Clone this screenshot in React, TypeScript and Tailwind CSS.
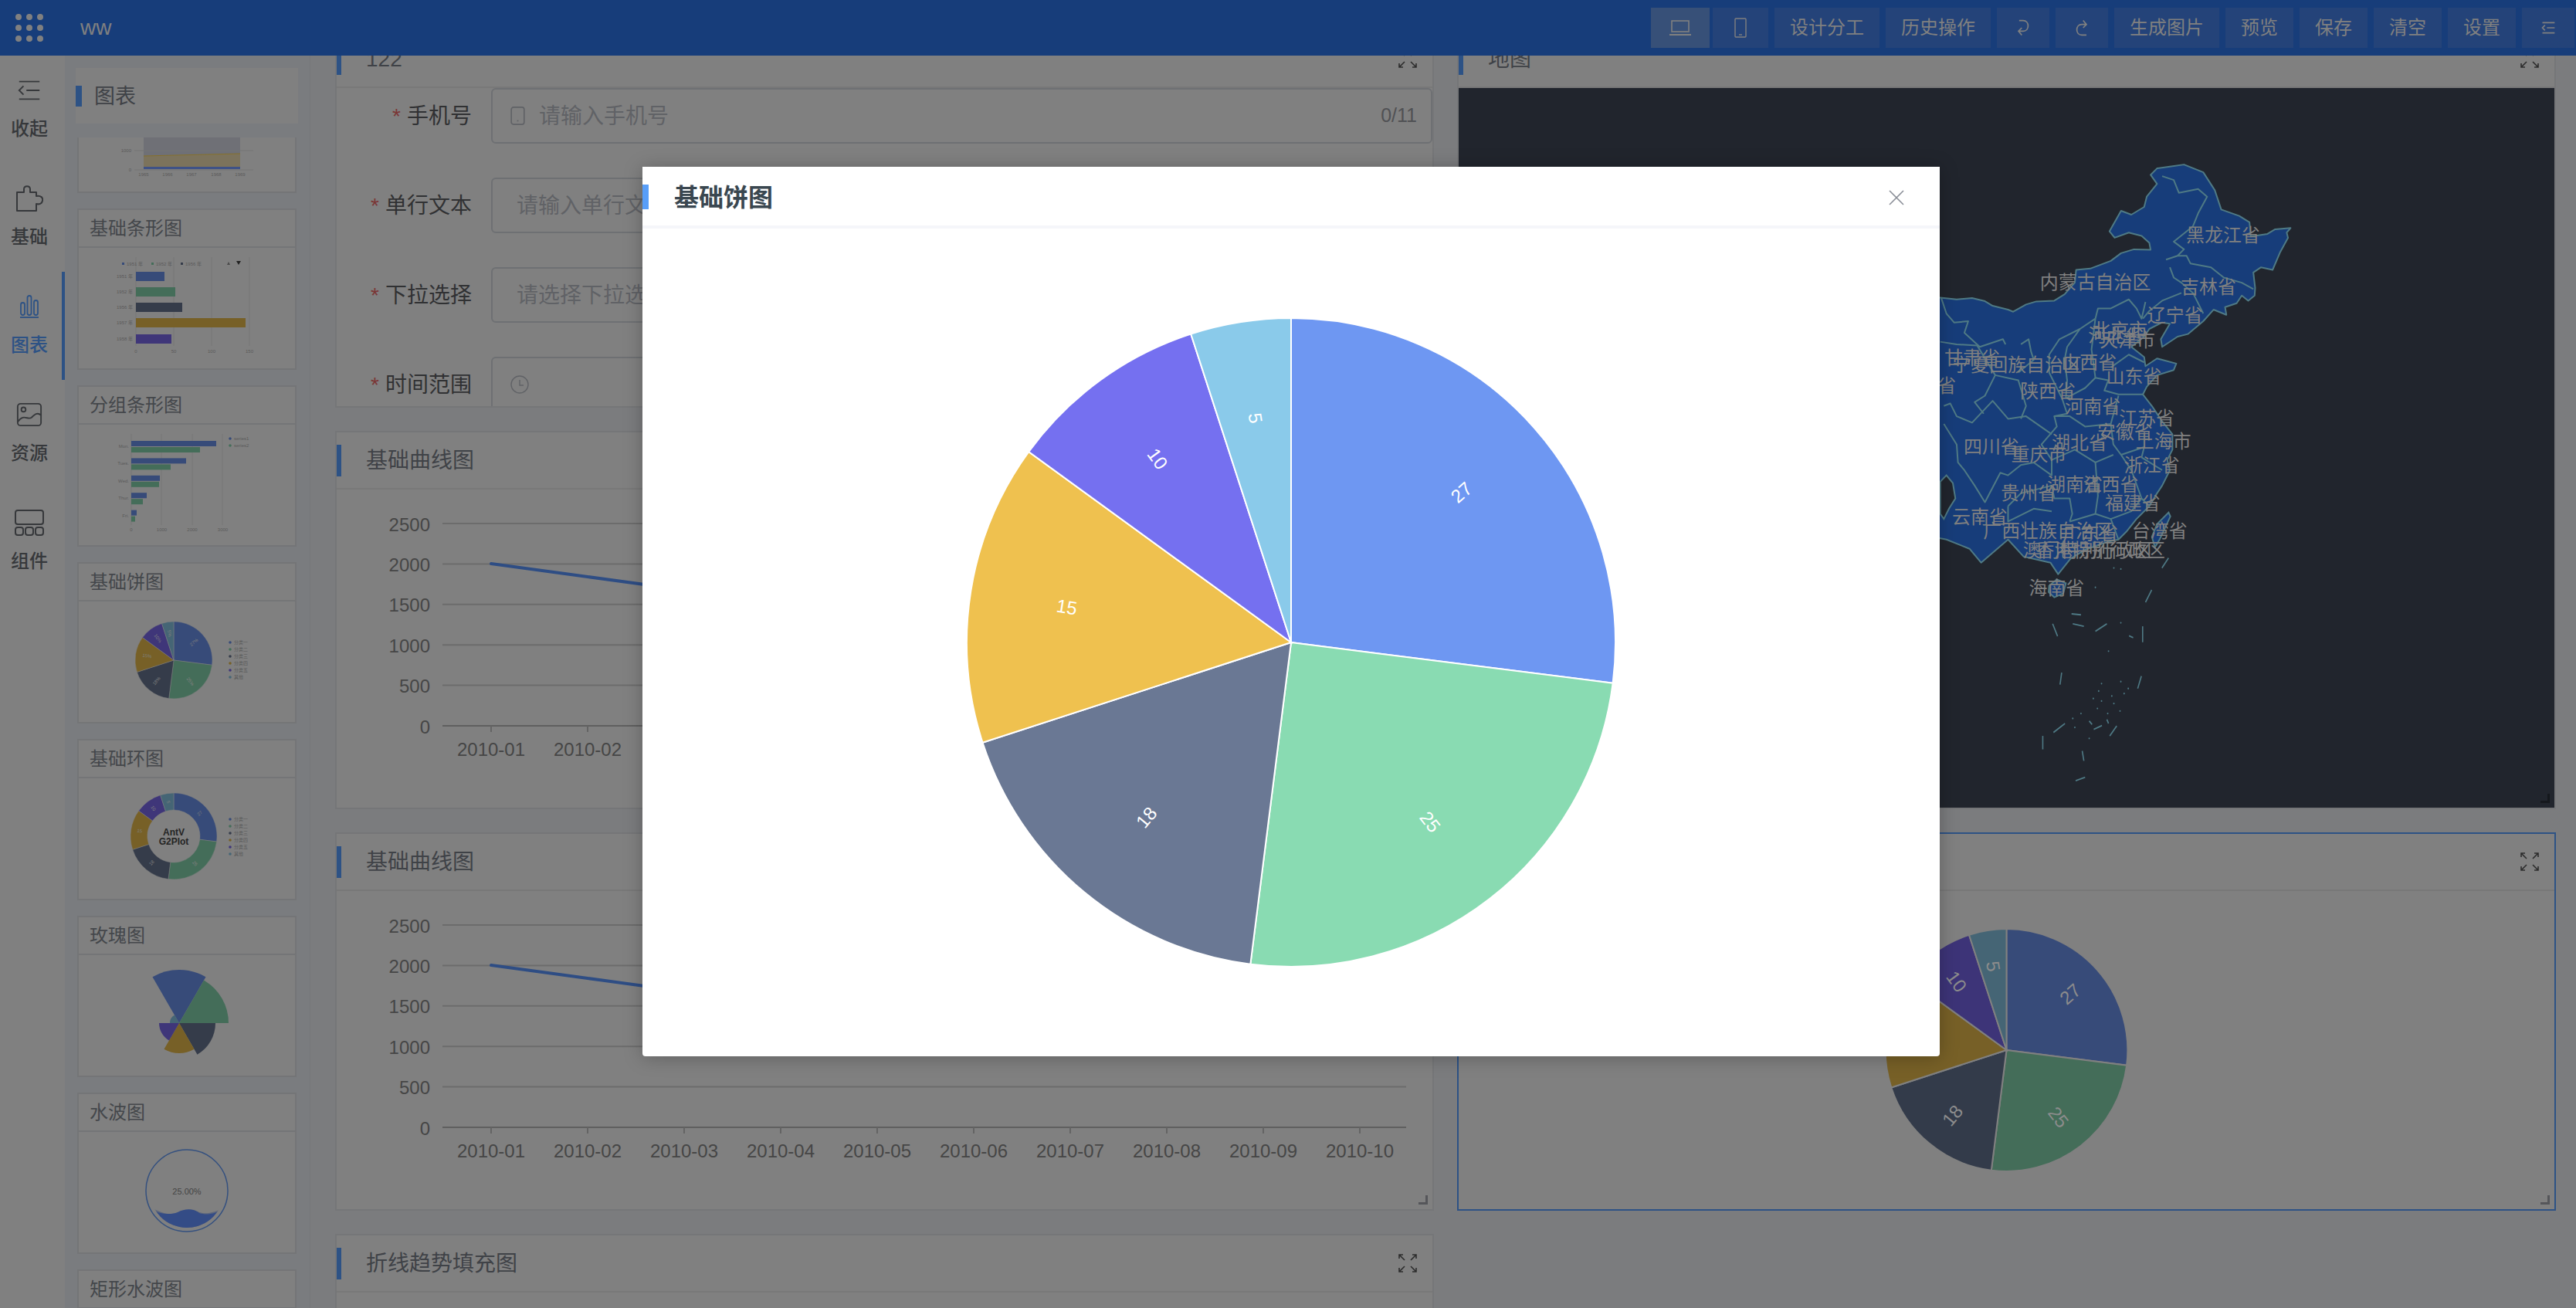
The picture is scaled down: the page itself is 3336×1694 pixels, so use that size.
import type { ReactNode } from 'react'

// Alle kleuren staan al gedimd (de scrim achter de modal zit er dus "ingebakken").
const THUMB = ['#374b79', '#446d59', '#353c4a', '#776027', '#3f3679', '#456575']
const MODAL_PIE = ['#6e97f2', '#89dbb2', '#6a7894', '#efc14f', '#7570f0', '#8acaea']
const DIM_PIE = ['#374b79', '#446d59', '#333b4a', '#776027', '#3d3478', '#456575']
const VALUES = [27, 25, 18, 15, 10, 5]
const BLUE = 'bg-[#2d5285]'

function polar(cx: number, cy: number, r: number, deg: number): [number, number] {
  const a = ((deg - 90) * Math.PI) / 180
  return [cx + r * Math.cos(a), cy + r * Math.sin(a)]
}

function sector(cx: number, cy: number, r: number, a0: number, a1: number, inner = 0): string {
  const [x0, y0] = polar(cx, cy, r, a0)
  const [x1, y1] = polar(cx, cy, r, a1)
  const large = a1 - a0 > 180 ? 1 : 0
  if (!inner) return `M${cx} ${cy}L${x0} ${y0}A${r} ${r} 0 ${large} 1 ${x1} ${y1}Z`
  const [x2, y2] = polar(cx, cy, inner, a1)
  const [x3, y3] = polar(cx, cy, inner, a0)
  return `M${x0} ${y0}A${r} ${r} 0 ${large} 1 ${x1} ${y1}L${x2} ${y2}A${inner} ${inner} 0 ${large} 0 ${x3} ${y3}Z`
}

function PieSlices({
  cx, cy, r, colors, stroke, labelColor, fontSize, inner = 0, labelAt = 0.7, suffix = '',
}: {
  cx: number; cy: number; r: number; colors: string[]; stroke: string; labelColor: string
  fontSize: number; inner?: number; labelAt?: number; suffix?: string
}) {
  let acc = 0
  return (
    <>
      {VALUES.map((v, i) => {
        const a0 = (acc / 100) * 360
        acc += v
        const a1 = (acc / 100) * 360
        const mid = (a0 + a1) / 2
        const [lx, ly] = polar(cx, cy, r * labelAt, mid)
        const rot = mid < 180 ? mid - 90 : mid - 270
        return (
          <g key={v}>
            <path d={sector(cx, cy, r, a0, a1, inner)} fill={colors[i]} stroke={stroke} strokeWidth={r > 100 ? 2 : 0.5} />
            <text
              x={lx}
              y={ly}
              fontSize={fontSize}
              fill={labelColor}
              textAnchor="middle"
              dominantBaseline="central"
              transform={`rotate(${rot} ${lx} ${ly})`}
            >
              {v}
              {suffix}
            </text>
          </g>
        )
      })}
    </>
  )
}

function Legend({ x, y, step = 9, items }: { x: number; y: number; step?: number; items: string[] }) {
  return (
    <>
      {items.map((t, i) => (
        <g key={t}>
          <circle cx={x} cy={y + i * step} r={1.8} fill={THUMB[i]} />
          <text x={x + 5} y={y + i * step} fontSize={6} fill="#5a5a5a" dominantBaseline="central">
            {t}
          </text>
        </g>
      ))}
    </>
  )
}

const LEGEND6 = ['分类一', '分类二', '分类三', '分类四', '分类五', '其他']

function ThumbSvg({ children }: { children: ReactNode }) {
  return (
    <svg viewBox="0 0 280 156" className="block h-[156px] w-[280px]">
      {children}
    </svg>
  )
}

function AreaThumb() {
  return (
    <ThumbSvg>
      <path d="M84 0H209V107L84 110Z" fill="#6f7076" />
      <path d="M84 110L209 107V124H84Z" fill="#7c735c" />
      <path d="M84 110L209 107" stroke="#85702c" fill="none" />
      <rect x={84} y={124} width={125} height={3} fill="#3f5286" />
      <line x1={72} x2={226} y1={103} y2={103} stroke="#747474" />
      <line x1={72} x2={226} y1={128} y2={128} stroke="#747474" />
      <text x={68} y={103} fontSize={6} fill="#5a5a5a" textAnchor="end" dominantBaseline="central">1000</text>
      <text x={68} y={128} fontSize={6} fill="#5a5a5a" textAnchor="end" dominantBaseline="central">0</text>
      {[84, 115, 146, 178, 209].map((x, i) => (
        <text key={x} x={x} y={134} fontSize={6} fill="#5a5a5a" textAnchor="middle" dominantBaseline="central">
          {1965 + i}
        </text>
      ))}
    </ThumbSvg>
  )
}

function BarThumb() {
  const bars = [37, 51, 60, 142, 46]
  const tops = [31, 51, 71, 91, 112]
  return (
    <ThumbSvg>
      {[74, 123, 172, 221].map((x) => (
        <line key={x} x1={x} x2={x} y1={12} y2={127} stroke="#767676" />
      ))}
      {bars.map((w, i) => (
        <g key={i}>
          <rect x={74} y={tops[i]} width={w} height={12} fill={THUMB[i]} />
          <text x={70} y={tops[i] + 6} fontSize={6} fill="#5a5a5a" textAnchor="end" dominantBaseline="central">
            {['1951 年', '1952 年', '1956 年', '1957 年', '1958 年'][i]}
          </text>
        </g>
      ))}
      {[0, 50, 100, 150].map((t, i) => (
        <text key={t} x={74 + i * 49} y={134} fontSize={6} fill="#5a5a5a" textAnchor="middle" dominantBaseline="central">
          {t}
        </text>
      ))}
      {[0, 38, 76].map((dx, i) => (
        <g key={dx}>
          <rect x={56 + dx} y={19} width={3} height={3} fill={THUMB[i]} />
          <text x={62 + dx} y={20.5} fontSize={6} fill="#5a5a5a" dominantBaseline="central">
            {['1951 年', '1952 年', '1956 年'][i]}
          </text>
        </g>
      ))}
      <path d="M192 22l2-4 2 4z" fill="#4a4a4a" />
      <path d="M204 17h6l-3 5z" fill="#222" />
    </ThumbSvg>
  )
}

function GroupBarThumb() {
  const rows = [[110, 89, 'Mon.'], [71, 51, 'Tues.'], [37, 36, 'Wed.'], [20, 15, 'Thur.'], [7, 5, 'Fri.']] as const
  return (
    <ThumbSvg>
      {[68, 107, 147, 186].map((x) => (
        <line key={x} x1={x} x2={x} y1={12} y2={130} stroke="#767676" />
      ))}
      {rows.map(([a, b, t], i) => (
        <g key={t}>
          <rect x={68} y={21 + i * 22.4} width={a} height={7} fill={THUMB[0]} />
          <rect x={68} y={29 + i * 22.4} width={b} height={7} fill={THUMB[1]} />
          <text x={65} y={28 + i * 22.4} fontSize={6} fill="#5a5a5a" textAnchor="end" dominantBaseline="central">
            {t}
          </text>
        </g>
      ))}
      {[0, 1000, 2000, 3000].map((t, i) => (
        <text key={t} x={68 + i * 39.5} y={136} fontSize={6} fill="#5a5a5a" textAnchor="middle" dominantBaseline="central">
          {t}
        </text>
      ))}
      <Legend x={196} y={18} items={['series1', 'series2']} />
    </ThumbSvg>
  )
}

function PieThumb() {
  return (
    <ThumbSvg>
      <PieSlices cx={123} cy={76} r={50} colors={THUMB} stroke="#808080" labelColor="#808080" fontSize={6} suffix="%" />
      <Legend x={196} y={53} items={LEGEND6} />
    </ThumbSvg>
  )
}

function DonutThumb() {
  return (
    <ThumbSvg>
      <PieSlices cx={123} cy={75} r={56} inner={34} labelAt={0.8} colors={THUMB} stroke="#808080" labelColor="#808080" fontSize={6} />
      <text x={123} y={70} fontSize={12} fontWeight={700} fill="#242424" textAnchor="middle" dominantBaseline="central">AntV</text>
      <text x={123} y={82} fontSize={12} fontWeight={700} fill="#242424" textAnchor="middle" dominantBaseline="central">G2Plot</text>
      <Legend x={196} y={53} items={LEGEND6} />
    </ThumbSvg>
  )
}

function RoseThumb() {
  const petals = [
    [-30, 30, 69],
    [30, 90, 64],
    [90, 150, 47],
    [150, 210, 39],
    [210, 270, 26],
    [270, 330, 12],
  ]
  return (
    <ThumbSvg>
      {petals.map(([a0, a1, r], i) => (
        <path key={a0} d={sector(130, 88, r, a0, a1)} fill={THUMB[i]} />
      ))}
    </ThumbSvg>
  )
}

function LiquidThumb() {
  return (
    <ThumbSvg>
      <defs>
        <clipPath id="liquid-clip">
          <circle cx={140} cy={76} r={48} />
        </clipPath>
      </defs>
      <circle cx={140} cy={76} r={53} fill="none" stroke="#34507f" strokeWidth={1.5} />
      <g clipPath="url(#liquid-clip)">
        <path d="M92 98C104 102 116 110 128 106C138 100 146 98 156 104C168 108 178 102 190 98V132H92Z" fill="#374b79" opacity={0.5} />
        <path d="M92 100C104 106 118 108 128 104C138 99 148 99 156 105C168 109 178 104 190 100V132H92Z" fill="#344c86" />
      </g>
      <text x={140} y={77} fontSize={11} fill="#444444" textAnchor="middle" dominantBaseline="central">25.00%</text>
    </ThumbSvg>
  )
}

function ThumbCard({ title, children }: { title?: string; children: ReactNode }) {
  return (
    <div className="w-[284px] shrink-0 border-2 border-[#747577] bg-[#808080]">
      {title && (
        <div className="flex h-[49px] items-center border-b-2 border-[#747577] pl-[14px] text-[24px] text-[#44474b]">{title}</div>
      )}
      {children}
    </div>
  )
}

function Icon({ children, className }: { children: ReactNode; className: string }) {
  return (
    <svg viewBox="0 0 36 36" fill="none" stroke="currentColor" strokeWidth="2" className={className}>
      {children}
    </svg>
  )
}

const RAIL: { label: string; active?: boolean; icon: ReactNode }[] = [
  {
    label: '收起',
    icon: (
      <Icon className="h-[34px] w-[34px]">
        <path d="M4 6H32M14 18H32M4 30H32M10 12L4 18L10 24" />
      </Icon>
    ),
  },
  {
    label: '基础',
    icon: (
      <Icon className="h-[36px] w-[36px]">
        <path d="M2 10H11V6C11 1 19 1 19 6V10H27V15C33 14 36 17 35 21C34 25 31 26 27 25V34H2Z" strokeLinejoin="round" />
      </Icon>
    ),
  },
  {
    label: '图表',
    active: true,
    icon: (
      <svg viewBox="0 0 24 30" fill="none" stroke="currentColor" strokeWidth="1.8" className="h-[30px] w-[24px]">
        <rect x="1" y="10" width="5" height="16" rx="2.5" />
        <rect x="9.5" y="1" width="5" height="25" rx="2.5" />
        <rect x="18" y="7" width="5" height="19" rx="2.5" />
        <path d="M0 29H24" />
      </svg>
    ),
  },
  {
    label: '资源',
    icon: (
      <Icon className="h-[34px] w-[36px]">
        <rect x="2" y="3" width="32" height="30" rx="4" />
        <circle cx="10" cy="11" r="3" />
        <path d="M2 28C10 16 16 26 21 22C25 18 29 14 34 19" />
      </Icon>
    ),
  },
  {
    label: '组件',
    icon: (
      <svg viewBox="0 0 38 34" fill="none" stroke="currentColor" strokeWidth="2" className="h-[34px] w-[38px]">
        <rect x="1" y="1" width="36" height="18" rx="3" />
        <rect x="1" y="23" width="10" height="10" rx="3" />
        <rect x="14" y="23" width="10" height="10" rx="3" />
        <rect x="27" y="23" width="10" height="10" rx="3" />
      </svg>
    ),
  },
]

function Toolbar() {
  const btn = 'flex h-[52px] items-center justify-center bg-[#244379] text-[24px] text-[#808080]'
  return (
    <div className="ml-auto flex items-center gap-2 pr-[2px]">
      <div className="flex gap-[4px]">
        <div className={`${btn} w-[76px] !bg-[#375078]`}>
          <svg viewBox="0 0 28 20" fill="none" stroke="currentColor" strokeWidth="1.6" className="h-[20px] w-[28px]">
            <rect x="3" y="1" width="22" height="14" />
            <path d="M0 19H28" strokeWidth="2" />
          </svg>
        </div>
        <div className={`${btn} w-[72px]`}>
          <svg viewBox="0 0 16 26" fill="none" stroke="currentColor" strokeWidth="1.4" className="h-[26px] w-[16px]">
            <rect x="1" y="1" width="14" height="24" rx="1" />
            <path d="M6 22H10" />
          </svg>
        </div>
      </div>
      <div className={`${btn} w-[136px]`}>设计分工</div>
      <div className={`${btn} w-[136px]`}>历史操作</div>
      <div className={`${btn} w-[68px]`}>
        <svg viewBox="0 0 24 28" fill="none" stroke="currentColor" strokeWidth="2" className="h-[24px] w-[24px]">
          <path d="M6 3H12C22 3 22 19 12 19H5M10 14L5 19L10 25" />
        </svg>
      </div>
      <div className={`${btn} w-[68px]`}>
        <svg viewBox="0 0 24 28" fill="none" stroke="currentColor" strokeWidth="2" className="h-[24px] w-[24px]">
          <path d="M19 25H12C2 25 2 9 12 9H19M14 3L19 9L14 14" />
        </svg>
      </div>
      <div className={`${btn} w-[136px]`}>生成图片</div>
      <div className={`${btn} w-[88px]`}>预览</div>
      <div className={`${btn} w-[88px]`}>保存</div>
      <div className={`${btn} w-[88px]`}>清空</div>
      <div className={`${btn} w-[88px]`}>设置</div>
      <div className={`${btn} w-[68px]`}>
        <svg viewBox="0 0 24 24" fill="none" stroke="currentColor" strokeWidth="2" className="h-[20px] w-[20px]">
          <path d="M3 4H22M10 12H22M3 20H22M7 8L3 12L7 16" />
        </svg>
      </div>
    </div>
  )
}

function ExpandIcon() {
  return (
    <svg viewBox="0 0 24 24" fill="none" stroke="#2c2c2c" strokeWidth="1.6" className="h-[24px] w-[24px] shrink-0">
      <path d="M1 6V1H6M1 1L8 8M18 1H23V6M23 1L16 8M1 18V23H6M1 23L8 16M18 23H23V18M23 23L16 16" />
    </svg>
  )
}

function CardHeader({ title }: { title: string }) {
  return (
    <div className="flex h-[74px] shrink-0 items-center border-b-2 border-[#787878] pr-[20px]">
      <span className={`h-[41px] w-[6px] shrink-0 ${BLUE}`} />
      <span className="ml-[32px] pt-[1px] text-[28px] text-[#3f4247]">{title}</span>
      <span className="ml-auto">
        <ExpandIcon />
      </span>
    </div>
  )
}

function ResizeHandle({ dark }: { dark?: boolean }) {
  return (
    <span
      className={`absolute right-[6px] bottom-[6px] h-[12px] w-[12px] border-r-[3px] border-b-[3px] ${
        dark ? 'border-[#15181d]' : 'border-[#55565a]'
      }`}
    />
  )
}

function FormRow({ label, children }: { label: string; children: ReactNode }) {
  return (
    <div className="flex h-[72px] shrink-0 items-center">
      <label className="w-[175px] shrink-0 pt-[2px] text-right text-[28px] text-[#303133]">
        <span className="mr-[8px] text-[#7b3636]">*</span>
        {label}
      </label>
      <div className="ml-[25px] flex h-full flex-1 items-center rounded-[6px] border-2 border-[#6e7073] text-[28px] text-[#606266]">
        {children}
      </div>
    </div>
  )
}

function LineChart() {
  const ys = [2500, 2000, 1500, 1000, 500, 0]
  return (
    <svg viewBox="0 0 1419 412" className="block h-[412px] w-full">
      {ys.map((v, i) => {
        const y = 44 + i * 52.4
        return (
          <g key={v}>
            <line x1={137} x2={1385} y1={y} y2={y} stroke={v === 0 ? '#5f5f5f' : '#6c6c6c'} strokeWidth={2} />
            <text x={121} y={y + 1} fontSize={24} fill="#464646" textAnchor="end" dominantBaseline="central">
              {v}
            </text>
          </g>
        )
      })}
      {Array.from({ length: 10 }, (_, i) => (
        <g key={i}>
          <line x1={200 + i * 125} x2={200 + i * 125} y1={306} y2={314} stroke="#646464" strokeWidth={2} />
          <text x={200 + i * 125} y={336} fontSize={24} fill="#464646" textAnchor="middle" dominantBaseline="central">
            2010-{String(i + 1).padStart(2, '0')}
          </text>
        </g>
      ))}
      <polyline
        points="200,96 325,113 450,130 575,150 700,120 825,170 950,135"
        fill="none"
        stroke="#2e4d84"
        strokeWidth={4}
        strokeLinecap="round"
      />
    </svg>
  )
}

function ChartCard({ title, children, className }: { title: string; children?: ReactNode; className: string }) {
  return (
    <div className={`relative flex shrink-0 flex-col overflow-hidden border-2 border-[#757678] bg-[#808080] ${className}`}>
      <CardHeader title={title} />
      {children}
    </div>
  )
}

// Kaart: coördinaten in de 3x-schaal van de crop, dus groep geschaald met 1/3.
const CHINA =
  'M-90 558L36 558L100 565L160 560L210 572L240 590L300 605L320 613L370 585L410 573L480 570L520 545L560 500L565 450L620 445L660 430L700 415L740 385L790 370L855 372L850 345L820 318L770 305L715 325L695 300L740 220L780 235L830 205L840 165L880 115L855 80L880 55L930 48L985 40L1060 70L1105 140L1130 215L1200 240L1240 265L1245 320L1310 310L1340 292L1400 287L1385 305L1390 325L1360 380L1330 450L1285 440L1255 460L1262 520L1260 550L1235 570L1210 550L1190 580L1145 595L1150 625L1100 605L1060 650L1000 700L960 710L900 750L895 720L930 660L900 655L850 680L830 710L780 750L830 790L835 825L880 795L955 815L945 840L880 860L840 905L825 935L860 980L900 1040L940 1090L940 1150L920 1190L930 1230L900 1290L880 1320L850 1370L800 1420L760 1470L730 1500L687 1509L600 1540L543 1575L495 1635L465 1590L360 1566L300 1500L195 1590L150 1536L60 1500L-90 1470Z'

const BORDERS = [
  '900,85 945,100 965,150 1040,135 1075,165 1040,230 1020,280 945,340 985,370 960,395',
  '915,410 960,395 995,395 1010,425 1090,440 1140,480 1210,500 1255,525',
  '930,440 945,480 975,500 1020,540 1060,620',
  '975,540 900,570 850,610 825,640',
  '640,640 650,600 700,600 770,565 800,600 820,640 835,575',
  '640,640 625,760 640,870 600,910 525,950',
  '640,640 580,680 530,750 520,800 530,880 525,950',
  '580,680 500,720 460,780 460,850 510,950 530,1010',
  '350,740 380,720 390,770 400,800 340,850',
  '700,830 770,780 830,810',
  '640,870 690,880 675,920 730,935 825,935',
  '530,1010 480,1020 540,1020 600,1060 700,1050 730,940',
  '700,1050 710,1130 740,1170 830,1140 820,1180 900,1230',
  '480,1020 490,1060 430,1130 470,1190 560,1150 640,1200 710,1170',
  '640,1200 650,1330 640,1400 700,1420 780,1390 820,1340',
  '740,1170 780,1230 820,1340 850,1370',
  '50,1050 100,1130 105,1200 130,1230 170,1290 210,1355 270,1240 300,1250 350,1210 400,1200 470,1250 470,1190',
  '50,980 75,970 100,1020 160,1045 240,960 300,1030 370,1020 470,1090',
  '36,730 100,740 180,745 250,860 210,940 170,965 205,1010',
  '40,560 60,620 90,655 145,650 130,695 190,750 280,720 290,740',
  '250,860 340,880 370,980 350,1030',
  '300,1370 350,1320 470,1290 480,1340 540,1340 550,1400 540,1430',
  '300,1370 300,1430 400,1380 470,1390',
  '540,1430 640,1400',
  '700,1420 730,1500',
]

const PROVINCES: [string, number, number][] = [
  ['黑龙江省', 1137, 315], ['内蒙古自治区', 640, 497], ['吉林省', 1080, 515], ['辽宁省', 950, 628],
  ['北京市', 735, 685], ['天津市', 765, 725], ['河北省', 720, 705], ['山西省', 615, 810],
  ['宁夏回族自治区', 335, 820], ['甘肃省', 160, 793], ['山东省', 790, 865], ['陕西省', 455, 922],
  ['河南省', 630, 982], ['江苏省', 840, 1027], ['安徽省', 755, 1080], ['上海市', 905, 1118],
  ['湖北省', 578, 1122], ['四川省', 235, 1138], ['重庆市', 420, 1170], ['浙江省', 860, 1210],
  ['湖南省', 560, 1285], ['江西省', 700, 1285], ['福建省', 785, 1358], ['贵州省', 380, 1320],
  ['云南省', 190, 1412], ['广西壮族自治区', 455, 1465], ['广东省', 620, 1475], ['台湾省', 890, 1465],
  ['青海省', -10, 900], ['澳门特别行政区', 610, 1542], ['香港特别行政区', 660, 1542], ['海南省', 489, 1689],
]

const SEA_DASHES = [
  [578, 68, 562, 88], [537, 132, 522, 157], [515, 205, 515, 237], [512, 305, 503, 330], [452, 405, 435, 425],
  [272, 425, 272, 452], [318, 298, 314, 322], [296, 200, 308, 225], [352, 515, 375, 508],
  [342, 180, 365, 182], [345, 200, 372, 205], [400, 215, 428, 200], [482, 224, 492, 228],
  [298, 418, 326, 400], [396, 412, 416, 404], [368, 455, 372, 475], [385, 395, 392, 402], [428, 392, 432, 400],
]
const SEA_DOTS = [
  [415, 320], [408, 335], [462, 316], [480, 330], [470, 340], [440, 345], [395, 350], [415, 355], [445, 360],
  [460, 375], [405, 370], [365, 380], [345, 390], [350, 408], [430, 380], [432, 255], [462, 198], [385, 430], [445, 88], [462, 90], [400, 127],
]

function MapChart() {
  return (
    <svg viewBox="1888 114 1420 934" className="block h-[934px] w-full bg-[#21252d]">
      <g transform="translate(2500 200) scale(0.33333)">
        <path d={CHINA} fill="#173d7a" stroke="#4f7a85" strokeWidth={6} strokeLinejoin="round" />
        <path d="M880 1440L925 1395L932 1410L890 1500L872 1530L860 1490Z" fill="#173d7a" stroke="#4f7a85" strokeWidth={6} />
        <path d="M36 1275L60 1250L85 1280L95 1340L70 1380L50 1420L36 1400Z" fill="#21252d" stroke="#4f7a85" strokeWidth={6} />
        <path d="M460 1680L490 1655L525 1670L515 1710L480 1725L458 1705Z" fill="#173d7a" stroke="#4f7a85" strokeWidth={6} />
        {BORDERS.map((pts) => (
          <polyline key={pts} points={pts} fill="none" stroke="#4f7a85" strokeWidth={6} strokeLinejoin="round" />
        ))}
        {PROVINCES.map(([name, x, y]) => (
          <text key={name} x={x} y={y} fontSize={72} fill="#808080" textAnchor="middle" dominantBaseline="central">
            {name}
          </text>
        ))}
      </g>
      <g transform="translate(2500 680) scale(0.5333 0.6468)">
        {SEA_DASHES.map(([x1, y1, x2, y2]) => (
          <line key={`${x1}-${y1}`} x1={x1} y1={y1} x2={x2} y2={y2} stroke="#4f7a85" strokeWidth={3} />
        ))}
        {SEA_DOTS.map(([x, y]) => (
          <circle key={`${x}-${y}`} cx={x} cy={y} r={1.8} fill="#4f7a85" />
        ))}
      </g>
    </svg>
  )
}

export default function App() {
  return (
    <div className="relative flex h-[1694px] w-[3336px] flex-col overflow-hidden bg-[#7b7c7e] font-['Liberation_Sans','Noto_Sans_CJK_SC',sans-serif]">
      {/* Topbalk */}
      <header className="relative z-10 flex h-[72px] shrink-0 items-center bg-[#173d7a] pl-[20px]">
        <div className="grid grid-cols-3 gap-[6px]">
          {Array.from({ length: 9 }, (_, i) => (
            <span key={i} className="h-[8px] w-[8px] rounded-full bg-[#808080]" />
          ))}
        </div>
        <span className="ml-[48px] text-[28px] text-[#808080]">ww</span>
        <Toolbar />
      </header>

      <div className="flex min-h-0 flex-1">
        {/* Icoonrail */}
        <nav className="w-[84px] shrink-0 bg-[#808080]">
          {RAIL.map((r) => (
            <div
              key={r.label}
              className={`flex h-[140px] flex-col items-center justify-center gap-[10px] border-r-4 pr-[4px] ${
                r.active ? 'border-[#2d5285] text-[#2d5285]' : 'border-transparent text-[#36383b]'
              }`}
            >
              <span className="flex h-[40px] items-center justify-center">{r.icon}</span>
              <span className="h-[40px] text-[24px] leading-[40px] font-medium">{r.label}</span>
            </div>
          ))}
        </nav>

        {/* Componentenlijst */}
        <aside className="flex w-[318px] shrink-0 flex-col overflow-hidden border-r border-[#76777a] bg-[#7a7c7f]">
          <div className="mt-[16px] ml-[14px] flex h-[72px] w-[288px] shrink-0 items-center bg-[#808080]">
            <span className={`h-[27px] w-[8px] ${BLUE}`} />
            <span className="ml-[16px] pt-[2px] text-[27px] text-[#3f4247]">图表</span>
          </div>
          <div className="mt-[18px] min-h-0 flex-1 overflow-hidden">
            <div className="mt-[-88px] ml-[16px] flex flex-col gap-[20px]">
              <ThumbCard>
                <AreaThumb />
              </ThumbCard>
              <ThumbCard title="基础条形图">
                <BarThumb />
              </ThumbCard>
              <ThumbCard title="分组条形图">
                <GroupBarThumb />
              </ThumbCard>
              <ThumbCard title="基础饼图">
                <PieThumb />
              </ThumbCard>
              <ThumbCard title="基础环图">
                <DonutThumb />
              </ThumbCard>
              <ThumbCard title="玫瑰图">
                <RoseThumb />
              </ThumbCard>
              <ThumbCard title="水波图">
                <LiquidThumb />
              </ThumbCard>
              <ThumbCard title="矩形水波图">
                <div className="h-[156px]" />
              </ThumbCard>
            </div>
          </div>
        </aside>

        {/* Canvas */}
        <main className="min-w-0 flex-1 overflow-hidden pl-[32px]">
          <div className="mt-[-34px] flex w-[2876px] gap-[30px]">
            <div className="flex w-[1423px] shrink-0 flex-col gap-[30px]">
              <ChartCard title="122" className="h-[490px]">
                <div className="flex flex-col gap-[44px]">
                  <FormRow label="手机号">
                    <svg viewBox="0 0 20 26" fill="none" stroke="currentColor" strokeWidth="1.8" className="ml-[23px] h-[24px] w-[19px]">
                      <rect x="1" y="1" width="18" height="24" rx="3" />
                      <path d="M9 20H11" />
                    </svg>
                    <span className="ml-[18px] pt-[2px]">请输入手机号</span>
                    <span className="mr-[18px] ml-auto text-[25px] text-[#505154]">0/11</span>
                  </FormRow>
                  <FormRow label="单行文本">
                    <span className="ml-[31px] pt-[2px]">请输入单行文本</span>
                  </FormRow>
                  <FormRow label="下拉选择">
                    <span className="ml-[31px] pt-[2px]">请选择下拉选择</span>
                  </FormRow>
                  <FormRow label="时间范围">
                    <svg viewBox="0 0 24 24" fill="none" stroke="currentColor" strokeWidth="1.4" className="ml-[23px] h-[24px] w-[24px]">
                      <circle cx="12" cy="12" r="11" />
                      <path d="M12 6V13H17" />
                    </svg>
                  </FormRow>
                </div>
              </ChartCard>
              <ChartCard title="基础曲线图" className="h-[490px]">
                <LineChart />
                <ResizeHandle />
              </ChartCard>
              <ChartCard title="基础曲线图" className="h-[490px]">
                <LineChart />
                <ResizeHandle />
              </ChartCard>
              <ChartCard title="折线趋势填充图" className="h-[200px]" />
            </div>

            <div className="flex w-[1423px] shrink-0 flex-col gap-[30px]">
              <ChartCard title="地图" className="h-[1010px]">
                <MapChart />
                <ResizeHandle dark />
              </ChartCard>
              <div className="relative flex h-[490px] shrink-0 flex-col border-2 border-[#2d5285] bg-[#808080]">
                <CardHeader title="基础饼图" />
                <svg viewBox="0 0 1420 412" className="block h-[412px] w-full">
                  <PieSlices cx={710} cy={206} r={157} colors={DIM_PIE} stroke="#808080" labelColor="#8c8c8c" fontSize={24} />
                </svg>
                <ResizeHandle />
              </div>
            </div>
          </div>
        </main>
      </div>

      {/* Modal */}
      <div className="absolute top-[216px] left-[832px] z-20 flex h-[1152px] w-[1680px] flex-col rounded-b-[4px] bg-white shadow-[0_2px_24px_rgba(0,0,0,0.25)]">
        <div className="flex h-[80px] shrink-0 items-start border-b-4 border-[#f5f6fa]">
          <span className="mt-[23px] h-[32px] w-[8px] bg-[#589ef8]" />
          <span className="mt-[19px] ml-[33px] text-[32px] leading-[42px] font-semibold text-[#3a4750]">基础饼图</span>
          <svg viewBox="0 0 20 20" fill="none" stroke="#8b8f98" strokeWidth="1.6" className="mt-[30px] mr-[46px] ml-auto h-[20px] w-[20px]">
            <path d="M1 1L19 19M19 1L1 19" />
          </svg>
        </div>
        <svg viewBox="0 0 1680 1072" className="block h-[1072px] w-full">
          <PieSlices cx={840} cy={536} r={420} colors={MODAL_PIE} stroke="#ffffff" labelColor="#ffffff" fontSize={24} />
        </svg>
      </div>
    </div>
  )
}
